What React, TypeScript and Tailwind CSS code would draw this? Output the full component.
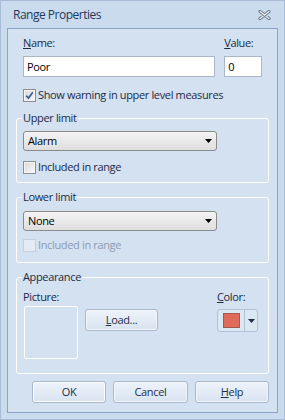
import React from "react";

function Check({ checked, disabled }: { checked?: boolean; disabled?: boolean }) {
  return (
    <span
      className={`w-[13px] h-[13px] shrink-0 border flex items-center justify-center ${
        disabled
          ? "border-[#c4cfdd] bg-[#e3ebf5]"
          : "border-[#8e8f8f] bg-gradient-to-br from-[#d8d8d8] to-[#fbfbfb] shadow-[inset_0_0_0_1px_#f4f4f4]"
      }`}
    >
      {checked && (
        <svg width="9" height="9" viewBox="0 0 9 9">
          <path d="M1.2 4.6 L3.5 7 L7.8 1.3" fill="none" stroke="#3d5f9e" strokeWidth="1.8" />
        </svg>
      )}
    </span>
  );
}

function Select({ value }: { value: string }) {
  return (
    <div className="h-[20px] w-[194px] border border-[#8a8a8a] rounded-[3px] bg-gradient-to-b from-[#f4f4f4] to-[#dedede] flex items-center pl-[4px] pr-[4px] text-black">
      <span className="flex-1">{value}</span>
      <svg width="7" height="4" viewBox="0 0 7 4">
        <path d="M0 0 H7 L3.5 4 Z" fill="#000" />
      </svg>
    </div>
  );
}

function Btn({ children, def, w }: { children: React.ReactNode; def?: boolean; w: string }) {
  return (
    <button
      type="button"
      className={`${w} h-[22px] rounded-[3px] border border-[#a9b8cd] bg-gradient-to-b from-[#eef3fa] to-[#d8e3f1] text-[#1e2f48] flex items-center justify-center ${
        def ? "shadow-[inset_0_0_0_1px_#ffffff]" : "shadow-[inset_0_0_0_1px_#f2f6fb]"
      }`}
    >
      {children}
    </button>
  );
}

export default function App() {
  return (
    <div className="w-[285px] h-[420px] bg-[#cbdbee] border border-[#a9bcd5] flex flex-col font-['Open_Sans',sans-serif] text-[11px] leading-[16px] tracking-[-0.35px] text-[#1b2b44]">
      <div className="h-[27px] flex items-center justify-between pl-[12px] pr-[13px]">
        <span className="text-[12px] tracking-[-0.5px] text-[#1e395b]">Range Properties</span>
        <svg width="13" height="10" viewBox="0 0 13 10">
          <path d="M2 1.5 L11 8.5 M11 1.5 L2 8.5" stroke="#6a788a" strokeWidth="3.2" strokeLinecap="round" />
          <path d="M2 1.5 L11 8.5 M11 1.5 L2 8.5" stroke="#eef2f7" strokeWidth="1.2" strokeLinecap="round" />
        </svg>
      </div>
      <div className="flex-1 mx-[6px] mb-[6px] border border-[#8aa4c6] bg-[#d4e1f1] flex flex-col">
        <div className="flex gap-[9px] px-[15px] pt-[6px]">
          <div className="flex flex-col w-[193px]">
            <span>
              <u>N</u>ame:
            </span>
            <div className="mt-[5px] h-[21px] bg-white border border-[#abb7c7] flex items-center px-[3px] text-black">
              Poor
            </div>
          </div>
          <div className="flex flex-col w-[38px]">
            <span>
              <u>V</u>alue:
            </span>
            <div className="mt-[5px] h-[21px] bg-white border border-[#abb7c7] flex items-center px-[3px] text-black">
              0
            </div>
          </div>
        </div>
        <label className="flex items-center gap-[2px] px-[15px] mt-[10px] h-[16px]">
          <Check checked />
          <span>Show warning in upper level measures</span>
        </label>

        <fieldset className="mx-[8px] mt-[7px] border border-white rounded-[3px] px-[6px] pb-[7px]">
          <legend className="px-[1px] -ml-[1px]">Upper limit</legend>
          <div className="mt-[5px]">
            <Select value="Alarm" />
          </div>
          <label className="flex items-center gap-[2px] mt-[8px] h-[16px]">
            <Check />
            <span>Included in range</span>
          </label>
        </fieldset>

        <fieldset className="mx-[8px] mt-[6px] border border-white rounded-[3px] px-[6px] pb-[9px]">
          <legend className="px-[1px] -ml-[1px]">Lower limit</legend>
          <div className="mt-[6px]">
            <Select value="None" />
          </div>
          <label className="flex items-center gap-[2px] mt-[6px] h-[16px] text-[#8d9cb1]">
            <Check disabled />
            <span>Included in range</span>
          </label>
        </fieldset>

        <fieldset className="mx-[8px] mt-[6px] border border-white rounded-[3px] px-[6px] pb-[14px]">
          <legend className="px-[1px] -ml-[1px]">Appearance</legend>
          <div className="flex mt-[4px]">
            <div className="flex flex-col">
              <span>Picture:</span>
              <div className="mt-[1px] ml-[1px] w-[54px] h-[53px] border border-white rounded-[2px]" />
            </div>
            <div className="ml-[7px] mt-[20px]">
              <Btn w="w-[73px]">
                <u>L</u>oad...
              </Btn>
            </div>
            <div className="ml-auto flex flex-col mr-[4px]">
              <span>
                <u>C</u>olor:
              </span>
              <div className="mt-[4px] h-[23px] w-[41px] border border-[#b3c2d6] rounded-[3px] bg-[#dce7f4] flex">
                <div className="w-[27px] border-r border-[#b3c2d6] flex items-center justify-center">
                  <span className="w-[17px] h-[15px] bg-[#e06b5a] border border-[#a55a4e]" />
                </div>
                <div className="flex-1 flex items-center justify-center">
                  <svg width="7" height="4" viewBox="0 0 7 4">
                    <path d="M0 0 H7 L3.5 4 Z" fill="#1e2f48" />
                  </svg>
                </div>
              </div>
            </div>
          </div>
        </fieldset>

        <div className="flex justify-end gap-[7px] mt-[7px] mr-[8px]">
          <Btn def w="w-[74px]">OK</Btn>
          <Btn w="w-[75px]">Cancel</Btn>
          <Btn w="w-[74px]">
            <u>H</u>elp
          </Btn>
        </div>
      </div>
    </div>
  );
}
